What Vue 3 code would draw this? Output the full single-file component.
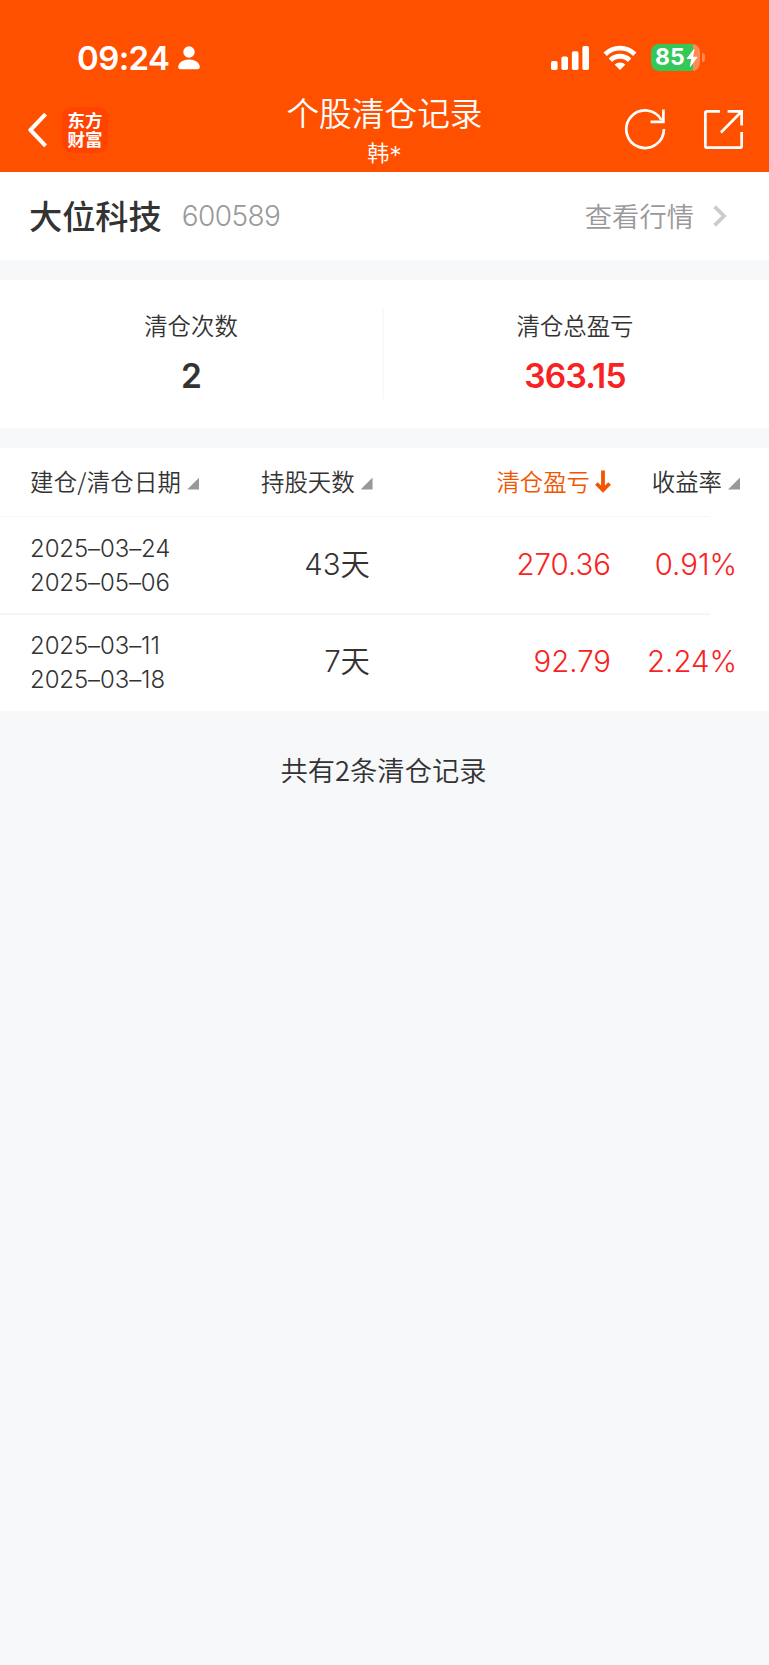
<script setup>
import { ref } from 'vue';

const stock = ref({ name: '大位科技', code: '600589' });

const summary = ref([
  { label: '清仓次数', value: '2', red: false },
  { label: '清仓总盈亏', value: '363.15', red: true }
]);

const records = ref([
  { open: '2025–03–24', close: '2025–05–06', days: 43, profit: '270.36', rate: '0.91%' },
  { open: '2025–03–11', close: '2025–03–18', days: 7, profit: '92.79', rate: '2.24%' }
]);
</script>

<template>
  <div class="page">
    <header class="header">
      <div class="status">
        <span class="time">09:24</span>
        <svg class="person" width="22" height="24" viewBox="0 0 22 24" fill="#fff">
          <circle cx="11" cy="6" r="5.7" />
          <path d="M0.2 20.5C0.8 16.5 5 13.4 11 13.4s10.2 3.1 10.8 7.1c0.2 1.7-0.8 2.8-2.4 2.8H2.6C1 23.3 0 22.2 0.2 20.5z" />
        </svg>
        <svg class="signal" width="38" height="24" viewBox="0 0 38 24" fill="#fff">
          <rect x="0" y="15" width="6.6" height="9" rx="1.8" />
          <rect x="10.4" y="10.5" width="6.6" height="13.5" rx="1.8" />
          <rect x="20.9" y="5.2" width="6.6" height="18.8" rx="1.8" />
          <rect x="31.4" y="0" width="6.6" height="24" rx="1.8" />
        </svg>
        <svg class="wifi" width="34" height="25" viewBox="0 0 34 25" fill="none" stroke="#fff" stroke-width="4.8">
          <path d="M2.2 9.2a21.3 21.3 0 0 1 29.6 0" />
          <path d="M7.4 15.2a13.7 13.7 0 0 1 19.2 0" />
          <path d="M17 25l-5.4-5.4a7.7 7.7 0 0 1 10.8 0z" fill="#fff" stroke="none" />
        </svg>
        <div class="battery">
          <div class="battery-body">
            <span class="battery-text">85</span>
            <svg class="bolt" width="12" height="18" viewBox="0 0 11 18" fill="#fff">
              <path d="M7.2 0.3L0.3 9.3Q0 10 0.7 10H4.7L3.4 17.3Q3.6 18 4.2 17.4L10.8 8.5Q11 7.8 10.4 7.7H6.5L8 0.7Q7.8 0 7.2 0.3z" />
            </svg>
          </div>
          <span class="battery-tip"></span>
        </div>
      </div>

      <div class="nav">
        <div class="nav-left">
          <svg width="20" height="36" viewBox="0 0 20 36" fill="none" stroke="#fff" stroke-width="4">
            <path d="M17.6 2.2L2.4 18L17.6 33.8" stroke-linejoin="round" />
          </svg>
          <div class="logo">东方财富</div>
        </div>
        <div class="nav-title">
          <h1>个股清仓记录</h1>
          <p>韩<span class="star">*</span></p>
        </div>
        <div class="nav-right">
          <svg width="42" height="42" viewBox="0 0 42 42" fill="none" stroke="#fff" stroke-width="2.7">
            <path d="M39.9 21A18.8 18.8 0 1 1 37.5 12" />
            <path d="M39.4 1.5V13.8H26.5" />
          </svg>
          <svg width="41" height="41" viewBox="0 0 40 40" fill="none" stroke="#fff" stroke-width="2.7">
            <path d="M16.5 2.3H4Q2.3 2.3 2.3 4V36Q2.3 37.7 4 37.7H36Q37.7 37.7 37.7 36V22.5" />
            <path d="M24 2.3H37.7V16M37.7 2.3L17.5 23" />
          </svg>
        </div>
      </div>
    </header>

    <section class="stock">
      <span class="stock-name">{{ stock.name }}</span>
      <span class="stock-code">{{ stock.code }}</span>
      <span class="stock-link">查看行情</span>
      <svg class="chevron" width="14" height="22" viewBox="0 0 14 22" fill="none" stroke="#ccc" stroke-width="3.8">
        <path d="M1.6 1.6L11 11L1.6 20.4" />
      </svg>
    </section>

    <section class="summary">
      <div v-for="item in summary" :key="item.label" class="summary-item">
        <div class="summary-label">{{ item.label }}</div>
        <div class="summary-value" :class="{ red: item.red }">{{ item.value }}</div>
      </div>
    </section>

    <section class="table">
      <div class="row head">
        <div class="cell-date">建仓/清仓日期<i class="triangle"></i></div>
        <div class="cell-days">持股天数<i class="triangle"></i></div>
        <div class="cell-profit active">
          清仓盈亏
          <svg class="arrow" width="16" height="23" viewBox="0 0 16 23" fill="none" stroke="#f25500" stroke-width="3.8">
            <path d="M8 0.5V20M1.4 13.5L8 20L14.6 13.5" />
          </svg>
        </div>
        <div class="cell-rate">收益率<i class="triangle"></i></div>
      </div>
      <div v-for="item in records" :key="item.open" class="row record">
        <div class="cell-date">
          <div>{{ item.open }}</div>
          <div>{{ item.close }}</div>
        </div>
        <div class="cell-days">{{ item.days }}天</div>
        <div class="cell-profit red">{{ item.profit }}</div>
        <div class="cell-rate red">{{ item.rate }}</div>
      </div>
    </section>

    <div class="total">共有{{ records.length }}条清仓记录</div>
  </div>
</template>

<style>
body {
  margin: 0;
  background: #f7f8fa;
}
</style>

<style scoped>
.page {
  width: 769px;
  min-height: 1665px;
  background: #f7f8fa;
  color: #333;
  font-family: "Noto Sans CJK SC", sans-serif;
  font-weight: 350;
}

.header {
  height: 172px;
  background: #ff5000;
  color: #fff;
}

.status {
  display: flex;
  align-items: center;
  height: 87px;
  padding: 28px 64px 0 77px;
  box-sizing: border-box;
}

.time {
  width: 92px;
  font: 600 33px/40px Inter, sans-serif;
  letter-spacing: -0.6px;
  white-space: nowrap;
}

.person {
  margin-left: 9px;
}

.signal {
  margin-left: auto;
}

.wifi {
  margin-left: 14px;
}

.battery {
  display: flex;
  align-items: center;
  margin-left: 14px;
}

.battery-body {
  display: flex;
  align-items: center;
  width: 49px;
  height: 27px;
  padding-left: 4px;
  box-sizing: border-box;
  border-radius: 8px;
  background: linear-gradient(to right, #34c759 42px, #ff8a55 42px);
}

.battery-text {
  font: 700 23px/27px Inter, sans-serif;
}

.bolt {
  flex: none;
  margin-left: 1px;
}

.battery-tip {
  width: 3px;
  height: 9px;
  margin-left: 2px;
  border-radius: 0 4px 4px 0;
  background: #ff8a55;
}

.nav {
  display: grid;
  grid-template-columns: 1fr auto 1fr;
  height: 85px;
}

.nav-left {
  display: flex;
  align-items: center;
  gap: 14px;
  padding-left: 28px;
}

.logo {
  width: 46px;
  height: 46px;
  padding: 3px 5px;
  box-sizing: border-box;
  border-radius: 10px;
  background: #ff4300;
  font-size: 17.5px;
  font-weight: 700;
  line-height: 19px;
  text-align: center;
}

.nav-title {
  text-align: center;
}

.nav-title h1 {
  margin: 5px 0 0;
  font-size: 32.7px;
  font-weight: 350;
  line-height: 40px;
}

.nav-title p {
  margin: 5px 0 0;
  font-size: 22px;
  line-height: 28px;
}

.star {
  font-family: Inter, sans-serif;
  font-size: 25px;
  line-height: 0;
  vertical-align: -4px;
}

.nav-right {
  display: flex;
  align-items: center;
  justify-content: flex-end;
  gap: 37px;
  padding: 0 25px 1px 0;
}

.stock {
  display: flex;
  align-items: center;
  height: 88px;
  padding: 0 42px 0 29px;
  background: #fff;
}

.stock-name {
  margin-bottom: 3px;
  font-size: 33.2px;
  font-weight: 500;
}

.stock-code {
  margin-left: 20px;
  color: #999;
  font: 300 28px/40px Inter, sans-serif;
  letter-spacing: -0.6px;
}

.stock-link {
  margin: 0 0 2px auto;
  color: #999;
  font-size: 27.3px;
}

.chevron {
  margin-left: 19px;
}

.summary {
  display: flex;
  height: 148px;
  margin-top: 20px;
  padding: 29px 0;
  box-sizing: border-box;
  background: #fff;
}

.summary-item {
  width: 384px;
  text-align: center;
}

.summary-item + .summary-item {
  padding-right: 3px;
  border-left: 2px solid #f8f9fa;
}

.summary-label {
  font-size: 23.4px;
  line-height: 32px;
}

.summary-value {
  margin-top: 15px;
  font: 600 33.5px/40px Inter, sans-serif;
  letter-spacing: -0.8px;
}

.red {
  color: #f82222;
}

.table {
  margin-top: 20px;
  background: #fff;
}

.row {
  display: grid;
  grid-template-columns: 231px 109px 241px 1fr;
  align-items: center;
  padding-left: 30px;
}

/* разделитель не доходит до правого края */
.head,
.record:not(:last-child) {
  background: linear-gradient(#f5f6f7, #f5f6f7) left bottom / 710px 1px no-repeat;
}

.record:not(:last-child) {
  background-size: 710px 2px;
}

.head {
  height: 69px;
  padding-bottom: 4px;
  box-sizing: border-box;
  font-size: 23.4px;
  white-space: nowrap;
}

.head > div {
  display: flex;
  align-items: center;
}

.triangle {
  flex: none;
  width: 12px;
  height: 12px;
  margin: 6px 0 0 6px;
  background: #999;
  clip-path: polygon(100% 0, 100% 100%, 0 100%);
}

.arrow {
  margin-top: 2px;
}

.head .cell-date {
  letter-spacing: 0.25px;
}

.active {
  gap: 5px;
  color: #f25500;
}

.head .cell-profit {
  justify-content: flex-end;
}

.head .cell-rate {
  justify-content: flex-end;
  padding-right: 29px;
}

.record {
  height: 98px;
  font-family: Inter, "Noto Sans CJK SC", sans-serif;
  font-size: 29.4px;
}

.record:last-child {
  height: 96px;
}

.record .cell-date {
  font-size: 24px;
  line-height: 34px;
  letter-spacing: -0.1px;
}

.record .cell-days,
.record .cell-profit,
.record .cell-rate {
  padding-bottom: 3px;
  line-height: 40px;
  text-align: right;
}

.record .cell-rate {
  padding-right: 32px;
}

.total {
  margin-top: 38px;
  padding-right: 2px;
  text-align: center;
  font-size: 27.3px;
  line-height: 40px;
}
</style>
